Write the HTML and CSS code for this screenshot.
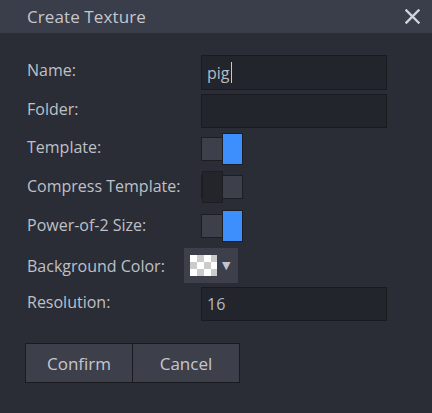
FILE: index.html
```html
<!DOCTYPE html>
<html lang="en">
<head>
  <meta charset="UTF-8" />
  <title>Create Texture</title>
  <link rel="stylesheet" href="styles.css">
</head>
<body>
  <div class="dialog">
    <div class="dialog-header">
      <span class="dialog-title">Create Texture</span>
      <button class="close-btn" aria-label="Close">
        <svg width="15" height="15" viewBox="0 0 15 15">
          <path d="M1.5 1.5 L13.5 13.5 M13.5 1.5 L1.5 13.5" stroke="#d2d3d8" stroke-width="2.4" stroke-linecap="square" fill="none"/>
        </svg>
      </button>
    </div>

    <div class="dialog-body">
      <div class="row row-name">
        <label>Name:</label>
        <div class="text-field"><span class="value">pig</span><span class="caret"></span></div>
      </div>
      <div class="row row-folder">
        <label>Folder:</label>
        <div class="text-field"></div>
      </div>
      <div class="row row-template">
        <label>Template:</label>
        <div class="toggle on"><span class="knob"></span></div>
      </div>
      <div class="row row-compress">
        <label>Compress Template:</label>
        <div class="toggle off"><span class="knob"></span></div>
      </div>
      <div class="row row-pow">
        <label>Power-of-2 Size:</label>
        <div class="toggle on"><span class="knob"></span></div>
      </div>
      <div class="row row-bg">
        <label>Background Color:</label>
        <button class="swatch-btn">
          <span class="checker"></span>
          <span class="arrow">▼</span>
        </button>
      </div>
      <div class="row row-res">
        <label>Resolution:</label>
        <div class="text-field"><span class="value">16</span></div>
      </div>

      <div class="actions">
        <button class="btn">Confirm</button>
        <button class="btn">Cancel</button>
      </div>
    </div>
  </div>
</body>
</html>
```

FILE: styles.css
```css
:root {
  --header-bg: #3a3d4a;
  --body-bg: #2a2d36;
  --field-bg: #22252c;
  --field-border: #191b20;
  --control-bg: #3d3f4b;
  --text: #bfc0c6;
  --accent: #3d8ffd;
}
html, body {
  margin: 0;
  padding: 0;
  background: var(--body-bg);
}
body {
  font-family: "Open Sans", "Noto Sans", sans-serif;
  color: var(--text);
  width: 432px;
  height: 413px;
  overflow: hidden;
}
.dialog {
  display: flex;
  flex-direction: column;
  height: 413px;
}
.dialog-header {
  height: 33px;
  background: var(--header-bg);
  display: flex;
  align-items: center;
  justify-content: space-between;
  padding: 0 12px 0 27px;
}
.dialog-title {
  font-size: 17px;
  color: #c6c7cc;
  letter-spacing: 0.1px;
}
.close-btn {
  background: none;
  border: none;
  padding: 0;
  width: 15px;
  height: 15px;
  display: flex;
  cursor: pointer;
}
.dialog-body {
  padding: 22px 0 0 27px;
}
.row {
  display: flex;
  align-items: center;
}
.row label {
  width: 174px;
  font-size: 16px;
  flex-shrink: 0;
  padding-bottom: 4px;
}
.row-name { height: 35px; }
.row-folder { height: 34px; margin-top: 4px; }
.row-template { height: 32px; margin-top: 5px; }
.row-compress { height: 32px; margin-top: 6px; }
.row-pow { height: 31px; margin-top: 7px; }
.row-bg { height: 35px; margin-top: 7px; }
.row-res { height: 34px; margin-top: 4px; }

.row-name label, .row-res label { padding-bottom: 5px; }
.row-compress label { padding-bottom: 3px; }
.row-pow label { padding-bottom: 1px; }
.row-bg label { padding-bottom: 0; }

.text-field {
  box-sizing: border-box;
  width: 186px;
  height: 100%;
  background: var(--field-bg);
  border: 1px solid var(--field-border);
  display: flex;
  align-items: center;
  padding-left: 5px;
  font-size: 16px;
  color: #b9bac1;
}
.caret {
  width: 1px;
  height: 21px;
  background: #c8c9ce;
  margin-left: 1px;
}

/* toggle switches */
.toggle {
  position: relative;
  box-sizing: border-box;
  width: 42px;
  height: 24px;
  background: var(--control-bg);
  border: 1px solid #1c1e23;
}
.toggle .knob {
  position: absolute;
  top: -5px;
  box-sizing: border-box;
  width: 21px;
  height: 32px;
  border: 1px solid #1c1e23;
}
.toggle.on .knob {
  right: -1px;
  background: var(--accent);
}
.toggle.off .knob {
  left: 0;
  background: #23252b;
}

/* background color picker */
.swatch-btn {
  margin-left: -17px;
  width: 54px;
  height: 35px;
  background: var(--control-bg);
  border: none;
  padding: 0 0 0 6px;
  display: flex;
  align-items: center;
  gap: 5px;
  cursor: pointer;
}
.checker {
  width: 27px;
  height: 21px;
  background-color: #fff;
  background-image:
    linear-gradient(45deg, #cbcbcb 25%, transparent 25%, transparent 75%, #cbcbcb 75%),
    linear-gradient(45deg, #cbcbcb 25%, transparent 25%, transparent 75%, #cbcbcb 75%);
  background-size: 14px 14px;
  background-position: 0 0, 7px 7px;
}
.arrow {
  font-size: 11px;
  color: #c4c5cc;
  font-family: "DejaVu Sans", sans-serif;
}

.actions {
  display: flex;
  margin: 22px 0 0 -2px;
}
.btn {
  height: 40px;
  width: 108px;
  background: var(--control-bg);
  border: 1px solid #191b20;
  color: #c6c7cd;
  font-family: "Open Sans", "Noto Sans", sans-serif;
  font-size: 17px;
  cursor: pointer;
}
.btn + .btn {
  margin-left: -1px;
}
```
